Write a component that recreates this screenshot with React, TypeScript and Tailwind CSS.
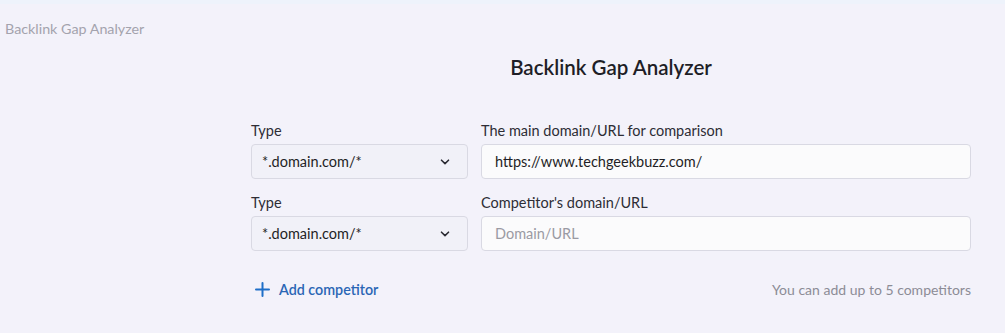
import React from "react";

function Chevron() {
  return (
    <svg width="10" height="6" viewBox="0 0 10 6" fill="none">
      <path d="M1.5 1.2 L5 4.6 L8.5 1.2" stroke="#2b2b33" strokeWidth="1.6" strokeLinecap="round" strokeLinejoin="round" />
    </svg>
  );
}

function Row({ label, value, placeholder }: { label: string; value?: string; placeholder?: string }) {
  return (
    <div className="flex gap-[13px]">
      <div className="w-[217px] flex flex-col">
        <div className="text-[14.5px] leading-[18px] text-[#2d2d35] mb-[4px]">Type</div>
        <div className="h-[35px] rounded-[4px] border border-[#d9d9e3] bg-[#f1f1f8] flex items-center justify-between pl-[10px] pr-[17px] text-[14.5px] text-[#1f1f26]">
          <span>*.domain.com/*</span>
          <Chevron />
        </div>
      </div>
      <div className="flex-1 flex flex-col">
        <div className="text-[14.5px] leading-[18px] text-[#2d2d35] mb-[4px]">{label}</div>
        <div className="h-[35px] rounded-[4px] border border-[#d9d9e3] bg-[#fbfbfc] flex items-center pl-[13px] text-[14.5px]">
          {value ? (
            <span className="text-[#1f1f26]">{value}</span>
          ) : (
            <span className="text-[#9a9aa3]">{placeholder}</span>
          )}
        </div>
      </div>
    </div>
  );
}

export default function App() {
  return (
    <div
      className="w-[1005px] h-[333px] bg-[#f3f2fa] overflow-hidden"
      style={{ fontFamily: "Lato, 'Noto Sans', sans-serif" }}
    >
      <div className="h-[4px] bg-[#eef3fb]" />
      <div className="pl-[5px] pt-[16px] text-[14.3px] leading-[18px] text-[#a3a3ad]">Backlink Gap Analyzer</div>
      <div className="ml-[251px] w-[720px]">
        <div className="text-center text-[20.5px] leading-[24px] font-semibold text-[#1e1e26] mt-[17px]">
          Backlink Gap Analyzer
        </div>
        <div className="mt-[43px] flex flex-col gap-[15px]">
          <Row label="The main domain/URL for comparison" value="https://www.techgeekbuzz.com/" />
          <Row label="Competitor's domain/URL" placeholder="Domain/URL" />
        </div>
        <div className="mt-[28px] flex items-center justify-between">
          <div className="flex items-center gap-[9px] pl-[4px]">
            <svg width="15" height="15" viewBox="0 0 15 15">
              <path d="M7.5 1 V14 M1 7.5 H14" stroke="#1f6fc8" strokeWidth="2" strokeLinecap="round" />
            </svg>
            <span className="text-[14.3px] font-semibold text-[#2a66b5]">Add competitor</span>
          </div>
          <span className="text-[14px] text-[#8c8c96]">You can add up to 5 competitors</span>
        </div>
      </div>
    </div>
  );
}
